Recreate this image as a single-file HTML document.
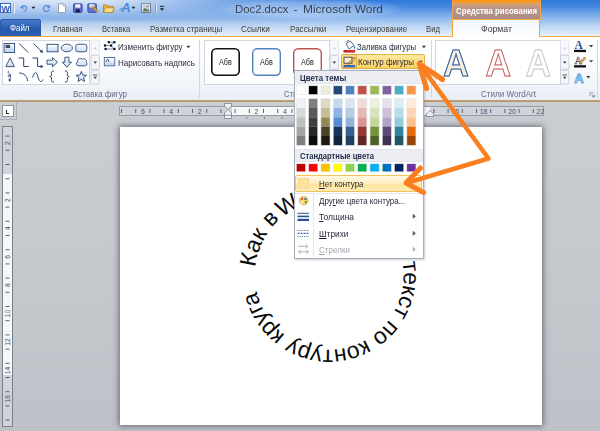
<!DOCTYPE html>
<html lang="ru">
<head>
<meta charset="utf-8">
<title>Doc2.docx - Microsoft Word</title>
<style>
html,body{margin:0;padding:0;}
body{width:600px;height:431px;overflow:hidden;position:relative;background:linear-gradient(to bottom,#cacdd2 100px,#c6c9ce 250px,#bec1c7 431px);font-family:"Liberation Sans","DejaVu Sans",sans-serif;font-size:11px;color:#333;}
.a{position:absolute;}
.t{position:absolute;white-space:nowrap;line-height:1;}
svg{position:absolute;overflow:visible;}
.gal{position:absolute;background:#fff;border:1px solid #d0d6e1;box-sizing:border-box;}
.sep{position:absolute;top:40px;width:1px;height:58px;background:#d5dbe6;}
</style>
</head>
<body>

<div class="a" style="left:0;top:0;width:600px;height:37px;background:linear-gradient(to bottom,#d9e6f6 0,#b9d1f0 8px,#8fb6e9 16px,#8ab3e8 19px,#b9d0ee 24px,#dde8f5 33px,#e6eef8 37px);"></div>
<div class="a" style="left:0;top:0;width:600px;height:37px;background:linear-gradient(to bottom,#3079dc 0,#4789e1 7px,#6ea4e8 13px,#93bcee 19px,#c1d8f4 27px,#e7effa 36px,#e9f0f9 37px);-webkit-mask-image:linear-gradient(to right,transparent 110px,#000 320px);mask-image:linear-gradient(to right,transparent 110px,#000 320px);"></div>
<div class="a" style="left:215px;top:-2px;width:190px;height:22px;border-radius:11px;background:radial-gradient(ellipse at center,rgba(255,255,255,.42) 0,rgba(255,255,255,.28) 45%,rgba(255,255,255,0) 72%);"></div>
<div class="t" style="left:235px;top:3.5px;font-size:11.8px;color:#3a4250;transform:scaleX(0.9596);transform-origin:0 50%;">Doc2.docx</div>
<div class="t" style="left:293.6px;top:3.5px;font-size:11.8px;color:#3a4250;">-</div>
<div class="t" style="left:302.7px;top:3.5px;font-size:11.8px;color:#3a4250;transform:scaleX(1.0113);transform-origin:0 50%;">Microsoft Word</div>
<svg style="left:0;top:0;" width="600" height="431" font-family="Liberation Sans, sans-serif"><rect x="0.5" y="3.5" width="10" height="9" fill="#fff" stroke="#2a5db0" stroke-width=".9"/><text x="1.3" y="11.6" font-size="9.5" font-weight="bold" fill="#2a5db0" textLength="8.6" lengthAdjust="spacingAndGlyphs">W</text><path d="M13.5 3v10.500" stroke="#9fb6d6" stroke-width="1"/><path d="M14.500 3v10.500" stroke="#eef4fb" stroke-width="1"/><path d="M21.500 6.800c3.500 -2.200 6 .3 5 2.500c-.6 1.300 -1.800 1.900 -3 2" stroke="#5c8edb" stroke-width="1.3" fill="none"/><path d="M19.800 7.600l3.600 -2.800v4.400z" fill="#5c8edb"/><path d="M31.400 6.800h4l-2 2.300z" fill="#1c2330"/><path d="M48.600 6.500a3 3 0 1 0 .6 3" stroke="#5c8edb" stroke-width="1.4" fill="none"/><path d="M50.200 4.400v3.800h-3.800z" fill="#5c8edb"/><path d="M58.500 3.800h4.800l2.200 2.200v6.600h-7z" fill="#fff" stroke="#8a93a3" stroke-width=".8"/><path d="M63.300 3.800v2.200h2.200" fill="#dfe4ec" stroke="#8a93a3" stroke-width=".6"/><rect x="73.500" y="3.800" width="8.600" height="8.600" rx=".8" fill="#5a6ccc" stroke="#34409a" stroke-width=".8"/><rect x="75.300" y="4.300" width="5" height="3.400" fill="#eef1fa"/><rect x="75.800" y="9.300" width="4" height="3" fill="#1d1b4a"/><rect x="87.800" y="3.800" width="8.600" height="8.600" rx=".8" fill="#6272ce" stroke="#34409a" stroke-width=".8"/><rect x="89.500" y="4.300" width="5" height="3.200" fill="#eef1fa"/><path d="M91.500 7l5.500 5.300l1.300 -1.300l-5.500 -5.300z" fill="#f0b23c" stroke="#7a5a22" stroke-width=".5"/><path d="M103.500 5h3.500l1 1.200h5v6.200h-9.500z" fill="#e9b83e" stroke="#a8781c" stroke-width=".7"/><path d="M103.500 12.400l2 -4.600h8.800l-2 4.600z" fill="#fbe28f" stroke="#a8781c" stroke-width=".7"/><text x="121.500" y="12.300" font-size="12.500" font-style="italic" font-weight="bold" fill="#4f86d8">A</text><path d="M119.500 9.700l5 -2" stroke="#4f86d8" stroke-width="1.200"/><path d="M131.400 6.800h4l-2 2.300z" fill="#1c2330"/><rect x="141.300" y="3.800" width="9.300" height="8.600" fill="#fff" stroke="#5a6678" stroke-width=".8"/><rect x="142.300" y="4.800" width="7.300" height="6.600" fill="#bcd2ee"/><path d="M142.300 11.400l2.600 -3.600l2 2l1.200 -1l1.500 2.600z" fill="#5d7a52"/><circle cx="147.800" cy="6.300" r="1.100" fill="#f08a24"/><path d="M155.500 3v10.500" stroke="#7f9cc8" stroke-width="1"/><path d="M156.500 3v10.500" stroke="#dce8f6" stroke-width="1"/><path d="M159.800 6.300h4.400" stroke="#1c2330" stroke-width="1"/><path d="M159.800 8.200h4.400l-2.200 2.500z" fill="#1c2330"/></svg>
<div class="a" style="left:452px;top:0;width:88px;height:19px;background:linear-gradient(to bottom,#f7981d 0,#f7981d 3px,#d9a273 3.5px,#b9968a 8px,#a88c86 19px);"></div>
<div class="t" style="left:455.5px;top:6px;font-size:9.6px;color:#fff;font-weight:bold;transform:scaleX(0.8161);transform-origin:0 50%;">Средства рисования</div>
<div class="a" style="left:539.5px;top:0;width:1px;height:20px;background:#f2a63c;"></div>
<div class="a" style="left:451.5px;top:0;width:1px;height:20px;background:#e9a24a;"></div>
<div class="a" style="left:0;top:19px;width:41px;height:17px;border-radius:3px 3px 0 0;background:linear-gradient(to bottom,#4a7fcc 0,#2f64b6 45%,#2358ab 55%,#2c62b6 100%);box-shadow:inset 0 0 0 1px #2a5aa6;"></div>
<div class="t" style="left:9.7px;top:23.3px;font-size:9.8px;color:#fff;transform:scaleX(0.8093);transform-origin:0 50%;">Файл</div>
<div class="t" style="left:52.5px;top:23.5px;font-size:9.4px;color:#3d3d3d;transform:scaleX(0.8266);transform-origin:0 50%;">Главная</div>
<div class="t" style="left:101.7px;top:23.5px;font-size:9.4px;color:#3d3d3d;transform:scaleX(0.8118);transform-origin:0 50%;">Вставка</div>
<div class="t" style="left:149.7px;top:23.5px;font-size:9.4px;color:#3d3d3d;transform:scaleX(0.8500);transform-origin:0 50%;">Разметка страницы</div>
<div class="t" style="left:241.3px;top:23.5px;font-size:9.4px;color:#3d3d3d;transform:scaleX(0.8693);transform-origin:0 50%;">Ссылки</div>
<div class="t" style="left:289.7px;top:23.5px;font-size:9.4px;color:#3d3d3d;transform:scaleX(0.8627);transform-origin:0 50%;">Рассылки</div>
<div class="t" style="left:345.8px;top:23.5px;font-size:9.4px;color:#3d3d3d;transform:scaleX(0.8454);transform-origin:0 50%;">Рецензирование</div>
<div class="t" style="left:426px;top:23.5px;font-size:9.4px;color:#3d3d3d;transform:scaleX(0.8250);transform-origin:0 50%;">Вид</div>
<div class="a" style="left:0;top:36px;width:600px;height:1px;background:#f3a83b;"></div>
<div class="a" style="left:452px;top:19px;width:88px;height:18px;box-sizing:border-box;background:linear-gradient(to bottom,#f1f5fb,#ffffff);border:1px solid #f3a83b;border-bottom:none;border-radius:2px 2px 0 0;"></div>
<div class="t" style="left:481px;top:23.5px;font-size:9.4px;color:#3d3d3d;transform:scaleX(0.9306);transform-origin:0 50%;">Формат</div>
<div class="a" style="left:0;top:37px;width:600px;height:63px;background:linear-gradient(to bottom,#ffffff 0,#fbfcfe 25px,#f1f4f9 48px,#e9edf4 63px);"></div>
<div class="a" style="left:0;top:100px;width:600px;height:2px;background:linear-gradient(#c2a071,#b39773);"></div>
<div class="gal" style="left:2px;top:40px;width:88px;height:45px;"></div>
<div class="t" style="left:118px;top:41.5px;font-size:9.6px;color:#2b2b3b;transform:scaleX(0.8333);transform-origin:0 50%;">Изменить фигуру</div>
<div class="t" style="left:118px;top:58px;font-size:9.6px;color:#2b2b3b;transform:scaleX(0.8374);transform-origin:0 50%;">Нарисовать надпись</div>
<div class="t" style="left:72.5px;top:88.5px;font-size:9.4px;color:#5d6b85;transform:scaleX(0.8487);transform-origin:0 50%;">Вставка фигур</div>
<div class="sep" style="left:199px;background:#f3d4a0;"></div>
<div class="gal" style="left:204px;top:40px;width:126px;height:45px;"></div>
<svg style="left:0;top:0;" width="600" height="431"><rect x="211.8" y="48.8" width="27.4" height="26.4" rx="4.5" fill="#fff" stroke="#111" stroke-width="1.6"/></svg>
<div class="t" style="left:219.2px;top:57.6px;font-size:8.8px;color:#1a1a1a;transform:scaleX(0.8208);transform-origin:0 50%;">Абв</div>
<svg style="left:0;top:0;" width="600" height="431"><rect x="252.7" y="48.7" width="27.6" height="26.6" rx="4.5" fill="#fff" stroke="#4f81bd" stroke-width="1.4"/></svg>
<div class="t" style="left:260.2px;top:57.6px;font-size:8.8px;color:#1a1a1a;transform:scaleX(0.8208);transform-origin:0 50%;">Абв</div>
<svg style="left:0;top:0;" width="600" height="431"><rect x="293.7" y="48.7" width="27.6" height="26.6" rx="4.5" fill="#fff" stroke="#c0504d" stroke-width="1.4"/></svg>
<div class="t" style="left:301.2px;top:57.6px;font-size:8.8px;color:#1a1a1a;transform:scaleX(0.8208);transform-origin:0 50%;">Абв</div>
<div class="t" style="left:357px;top:41.5px;font-size:9.6px;color:#2b2b3b;transform:scaleX(0.8053);transform-origin:0 50%;">Заливка фигуры</div>
<div class="a" style="left:341px;top:54px;width:84px;height:15px;box-sizing:border-box;background:linear-gradient(to bottom,#fde9a4,#fbd25e);border:1px solid #e3b246;border-radius:2px;"></div>
<div class="a" style="left:341px;top:54px;width:16px;height:15px;box-sizing:border-box;border:1px solid #e3a93a;border-radius:2px;background:linear-gradient(to bottom,#fde391,#fbcd55);"></div>
<div class="t" style="left:357.5px;top:57px;font-size:9.6px;color:#2b2b3b;transform:scaleX(0.8347);transform-origin:0 50%;">Контур фигуры</div>
<div class="t" style="left:284px;top:88.5px;font-size:9.4px;color:#5d6b85;transform:scaleX(0.8246);transform-origin:0 50%;">Стили фигур</div>
<div class="sep" style="left:431px;background:#f3d4a0;"></div>
<div class="gal" style="left:435px;top:40px;width:125.5px;height:45px;"></div>
<div class="t" style="left:481px;top:88.5px;font-size:9.4px;color:#5d6b85;transform:scaleX(0.8617);transform-origin:0 50%;">Стили WordArt</div>
<div class="sep" style="left:597px;"></div>
<svg style="left:0;top:0;" width="600" height="431"><defs><linearGradient id="sg" x1="0" y1="0" x2="0" y2="1"><stop offset="0" stop-color="#fbfdff"/><stop offset="1" stop-color="#c9dbf3"/></linearGradient></defs><rect x="4.1" y="43.5" width="10.5" height="9" fill="url(#sg)" stroke="#2a4574" stroke-width=".9"/><rect x="5.6" y="44.8" width="4.5" height="3.2" fill="#3a4a6a"/><rect x="5.1" y="48.7" width="8.5" height="2.8" fill="#c5d6ee"/><path d="M19.2 43.5l9 9" stroke="#2a4574" stroke-width="1" fill="none"/><path d="M33.6 43.5l8.5 8.5" stroke="#2a4574" stroke-width="1" fill="none"/><path d="M43.1 53.0l-3.6 -1l2.6 -2.6z" fill="#2a4574"/><rect x="47.0" y="44.3" width="11" height="7.5" fill="url(#sg)" stroke="#2a4574" stroke-width=".9"/><ellipse cx="66.9" cy="48.0" rx="5.5" ry="3.8" fill="url(#sg)" stroke="#2a4574" stroke-width=".9"/><rect x="75.8" y="44.3" width="11" height="7.5" rx="2" fill="url(#sg)" stroke="#2a4574" stroke-width=".9"/><path d="M10.1 58.0l4.3 8.6h-8.6z" fill="url(#sg)" stroke="#2a4574" stroke-width=".9"/><path d="M18.7 58.0h5v8.5h5" stroke="#2a4574" stroke-width="1" fill="none"/><path d="M32.6 58.0h5v8.5h4" stroke="#2a4574" stroke-width="1" fill="none"/><path d="M43.6 66.5l-3 -1.8v3.6z" fill="#2a4574"/><path d="M47.0 60.2h5.5v-2.6l5 4.6l-5 4.6v-2.6h-5.5z" fill="url(#sg)" stroke="#2a4574" stroke-width=".9"/><path d="M64.9 57.2v5h-2.6l4.6 5l4.6 -5h-2.6v-5z" fill="url(#sg)" stroke="#2a4574" stroke-width=".9"/><path d="M77.8 61.8c-1 -3 3 -4.5 4.5 -2.5c2 -1.5 5 .5 4 3c1.500 1.500 .5 3.500 -1.500 3.500h-6.500c-2.500 0 -2.500 -3.500 -.5 -4z" fill="url(#sg)" stroke="#2a4574" stroke-width=".9"/><path d="M8.8 71.0c-3 2 3 2.500 1 5c-1.500 1.500 -2.500 0 -1 -1c2 -1 2.500 2 .5 4.500" stroke="#2a4574" stroke-width=".9" fill="none"/><path d="M9.6 82.0l1.800 -2.800l-3.200 .4z" fill="#2a4574"/><path d="M19.2 73.0c5 0 8 3.500 8.500 8" stroke="#2a4574" stroke-width="1" fill="none"/><path d="M32.6 77.5c2 -6.500 4 -6.500 5.500 0c1.500 5 3.500 5 5 2" stroke="#2a4574" stroke-width="1" fill="none"/><path d="M54.0 71.0c-2.500 0 -2.500 .5 -2.500 2.500v1.500c0 1 -.5 1.500 -1.800 1.500c1.300 0 1.800 .5 1.800 1.500v1.500c0 2 0 2.500 2.500 2.500" stroke="#2a4574" stroke-width="1" fill="none"/><path d="M64.9 71.0c2.500 0 2.500 .5 2.500 2.500v1.500c0 1 .5 1.500 1.800 1.500c-1.300 0 -1.800 .5 -1.800 1.500v1.500c0 2 0 2.500 -2.500 2.500" stroke="#2a4574" stroke-width="1" fill="none"/><polygon points="81.30,71.40 82.71,75.06 86.63,75.27 83.58,77.74 84.59,81.53 81.30,79.40 78.01,81.53 79.02,77.74 75.97,75.27 79.89,75.06" fill="url(#sg)" stroke="#2a4574" stroke-width=".9"/><rect x="91.0" y="40.0" width="8.4" height="15.0" rx="1" fill="#f7f8fb" stroke="#dde1e9" stroke-width=".8"/><rect x="91.0" y="55.3" width="8.4" height="14.0" rx="1" fill="#f3f5f9" stroke="#c3cad6" stroke-width=".8"/><rect x="91.0" y="70.3" width="8.4" height="13.7" rx="1" fill="#f3f5f9" stroke="#c3cad6" stroke-width=".8"/><path d="M93.4 49.2l1.800 -2.100l1.800 2.100z" fill="#c9cdd4"/><path d="M93.4 61.600h3.600l-1.800 2.200z" fill="#3a4250"/><path d="M93.0 75h4.400" stroke="#3a4250" stroke-width=".9"/><path d="M93.4 76.800h3.600l-1.800 2.200z" fill="#3a4250"/><rect x="330.1" y="40.0" width="8.4" height="15.0" rx="1" fill="#f7f8fb" stroke="#dde1e9" stroke-width=".8"/><rect x="330.1" y="55.3" width="8.4" height="14.0" rx="1" fill="#f3f5f9" stroke="#c3cad6" stroke-width=".8"/><rect x="330.1" y="70.3" width="8.4" height="13.7" rx="1" fill="#f3f5f9" stroke="#c3cad6" stroke-width=".8"/><path d="M332.5 49.2l1.800 -2.100l1.800 2.100z" fill="#c9cdd4"/><path d="M332.5 61.600h3.600l-1.800 2.200z" fill="#3a4250"/><path d="M332.1 75h4.400" stroke="#3a4250" stroke-width=".9"/><path d="M332.5 76.800h3.600l-1.800 2.200z" fill="#3a4250"/><rect x="560.5" y="40.0" width="8.4" height="15.0" rx="1" fill="#f7f8fb" stroke="#dde1e9" stroke-width=".8"/><rect x="560.5" y="55.3" width="8.4" height="14.0" rx="1" fill="#f3f5f9" stroke="#c3cad6" stroke-width=".8"/><rect x="560.5" y="70.3" width="8.4" height="13.7" rx="1" fill="#f3f5f9" stroke="#c3cad6" stroke-width=".8"/><path d="M562.9 49.2l1.800 -2.100l1.800 2.100z" fill="#c9cdd4"/><path d="M562.9 61.600h3.600l-1.800 2.200z" fill="#3a4250"/><path d="M562.5 75h4.400" stroke="#3a4250" stroke-width=".9"/><path d="M562.9 76.800h3.600l-1.800 2.200z" fill="#3a4250"/><path d="M108.8 42.200h5.600l-3.400 3.300l3.400 3.500h-8.800M105 45.500h6" fill="none" stroke="#4a74c0" stroke-width=".8"/><rect x="103.9" y="44.4" width="2.2" height="2.200" fill="#111"/><rect x="107.7" y="41.1" width="2.2" height="2.200" fill="#111"/><rect x="113.3" y="41.1" width="2.2" height="2.200" fill="#111"/><rect x="109.9" y="44.4" width="2.2" height="2.200" fill="#111"/><rect x="104.5" y="47.9" width="2.2" height="2.200" fill="#111"/><rect x="113.3" y="47.9" width="2.2" height="2.200" fill="#111"/><path d="M186.3 45.800h4.200l-2.100 2.400z" fill="#3a4250"/><rect x="104.300" y="57.500" width="10.500" height="8.300" fill="url(#sg)" stroke="#4a6796" stroke-width=".9"/><path d="M106 62l1.600 -3l1.600 3" stroke="#2a3550" stroke-width=".8" fill="none"/><rect x="105.500" y="62.800" width="8" height="2" fill="#c5d6ee"/><path d="M346 43.500l4.500 -2.500l3.500 4.500l-5 3.500z" fill="#f2f5fa" stroke="#3a4a6a" stroke-width=".8"/><path d="M347 42.500c-.5 -2.500 2 -3 2.500 -1" stroke="#3a4a6a" stroke-width=".7" fill="none"/><path d="M354.200 45.500c1 1.500 1.500 2.500 .6 3.200c-.9 .5 -1.500 -.5 -.6 -3.200z" fill="#3f6fc0"/><rect x="343.500" y="50" width="11.500" height="2.600" fill="#cf2a27"/><path d="M421.800 45.800h4.200l-2.100 2.400z" fill="#3a4250"/><rect x="344" y="57.200" width="8" height="6" fill="#fdf3cf" stroke="#3a3f4a" stroke-width=".9"/><path d="M348.500 62.500l5.500 -5.500l1.300 1.300l-5.500 5.500l-1.800 .5z" fill="#e9b36a" stroke="#5a4632" stroke-width=".6"/><rect x="343.500" y="65" width="11.500" height="2.400" fill="#2f62c4"/><path d="M418.300 60.800h4.200l-2.100 2.400z" fill="#3a4250"/><path d="M593.5 92.500h-3.500v3.500" stroke="#8a93a3" stroke-width=".8" fill="none"/><path d="M591.5 94l2.800 2.800m0 -2.200v2.200h-2.200" stroke="#6a7385" stroke-width=".8" fill="none"/></svg>
<svg style="left:0;top:0;" width="600" height="431" font-family="Liberation Sans, sans-serif"><text x="443.3" y="75.8" font-size="36" font-weight="bold" fill="#f4eedd" stroke="#3560a8" stroke-width="1" textLength="25.6" lengthAdjust="spacingAndGlyphs" style="filter:drop-shadow(0.6px 0.8px 0.5px rgba(60,60,60,.45))">A</text><text x="485.4" y="75.800" font-size="36" font-weight="bold" fill="#fffdfd" stroke="#c8605c" stroke-width=".9" textLength="25.6" lengthAdjust="spacingAndGlyphs" style="filter:drop-shadow(0.5px 0.7px 0.5px rgba(120,60,60,.3))">A</text><text x="525.8" y="75.800" font-size="36" font-weight="bold" fill="#ffffff" stroke="#c9ccd2" stroke-width=".9" textLength="25.2" lengthAdjust="spacingAndGlyphs" style="filter:drop-shadow(0.5px 0.7px 0.6px rgba(90,90,90,.3))">A</text><text x="574.500" y="49.300" font-size="11.500" font-family="Liberation Serif, serif" fill="#2b4f91" font-weight="bold">A</text><rect x="574" y="49.800" width="12" height="2.300" fill="#111"/><text x="574.500" y="64" font-size="10.500" font-family="Liberation Serif, serif" fill="#fff" stroke="#555" stroke-width=".5">A</text><path d="M579 63l5.500 -6l1.300 1.300l-5.500 6z" fill="#e4a64a" stroke="#6a4a2a" stroke-width=".5"/><rect x="574" y="65.200" width="12" height="2.300" fill="#111"/><text x="574.300" y="82.500" font-size="13" font-weight="bold" fill="#eaf5fd" stroke="#5aa9e2" stroke-width="1">A</text><path d="M589.0 45.0h4.200l-2.100 2.400z" fill="#3a4250"/><path d="M589.0 60.2h4.200l-2.100 2.400z" fill="#3a4250"/><path d="M586.2 76.0h4.200l-2.100 2.400z" fill="#3a4250"/></svg>
<div class="a" style="left:120px;top:127px;width:422.3px;height:297.8px;background:#fff;box-shadow:0 0 6px 1px rgba(60,66,78,.7);"></div>
<div class="a" style="left:0;top:101px;width:17px;height:19px;border-right:1px solid #aab0ba;border-bottom:1px solid #aab0ba;box-sizing:border-box;"></div>
<div class="a" style="left:2px;top:105px;width:12px;height:12px;background:#fff;border:1px solid #8e959f;box-sizing:border-box;"></div>
<div class="a" style="left:5.9px;top:109.8px;width:1.4px;height:4.1px;background:#222;"></div><div class="a" style="left:5.9px;top:112.6px;width:3px;height:1.3px;background:#222;"></div>
<div class="a" style="left:119px;top:106px;width:425px;height:10px;box-sizing:border-box;background:#d0d3d9;border:1px solid #959ba6;"></div>
<div class="a" style="left:232px;top:107px;width:198px;height:8px;background:#f6f7f9;"></div>
<svg style="left:0;top:0;" width="600" height="431" font-family="Liberation Sans, sans-serif"><rect x="121.0" y="109" width="1" height="4" fill="#5b6370"/><rect x="135.2" y="109" width="1" height="4" fill="#5b6370"/><text x="142.8" y="113.6" font-size="6.8" text-anchor="middle" fill="#4a5260">6</text><rect x="149.4" y="109" width="1" height="4" fill="#5b6370"/><rect x="163.6" y="109" width="1" height="4" fill="#5b6370"/><text x="171.2" y="113.6" font-size="6.8" text-anchor="middle" fill="#4a5260">4</text><rect x="177.8" y="109" width="1" height="4" fill="#5b6370"/><rect x="192.0" y="109" width="1" height="4" fill="#5b6370"/><text x="199.6" y="113.6" font-size="6.8" text-anchor="middle" fill="#4a5260">2</text><rect x="206.2" y="109" width="1" height="4" fill="#5b6370"/><rect x="220.4" y="109" width="1" height="4" fill="#5b6370"/><rect x="234.6" y="109" width="1" height="4" fill="#5b6370"/><rect x="248.8" y="109" width="1" height="4" fill="#5b6370"/><text x="256.4" y="113.6" font-size="6.8" text-anchor="middle" fill="#4a5260">2</text><rect x="263.0" y="109" width="1" height="4" fill="#5b6370"/><rect x="277.2" y="109" width="1" height="4" fill="#5b6370"/><text x="284.8" y="113.6" font-size="6.8" text-anchor="middle" fill="#4a5260">4</text><rect x="291.4" y="109" width="1" height="4" fill="#5b6370"/><rect x="305.6" y="109" width="1" height="4" fill="#5b6370"/><text x="313.2" y="113.6" font-size="6.8" text-anchor="middle" fill="#4a5260">6</text><rect x="319.8" y="109" width="1" height="4" fill="#5b6370"/><rect x="334.0" y="109" width="1" height="4" fill="#5b6370"/><text x="341.6" y="113.6" font-size="6.8" text-anchor="middle" fill="#4a5260">8</text><rect x="348.2" y="109" width="1" height="4" fill="#5b6370"/><rect x="362.4" y="109" width="1" height="4" fill="#5b6370"/><text x="370.0" y="113.6" font-size="6.8" text-anchor="middle" fill="#4a5260">10</text><rect x="376.6" y="109" width="1" height="4" fill="#5b6370"/><rect x="390.8" y="109" width="1" height="4" fill="#5b6370"/><text x="398.4" y="113.6" font-size="6.8" text-anchor="middle" fill="#4a5260">12</text><rect x="405.0" y="109" width="1" height="4" fill="#5b6370"/><rect x="419.2" y="109" width="1" height="4" fill="#5b6370"/><rect x="433.4" y="109" width="1" height="4" fill="#5b6370"/><rect x="447.6" y="109" width="1" height="4" fill="#5b6370"/><text x="455.2" y="113.6" font-size="6.8" text-anchor="middle" fill="#4a5260">16</text><rect x="461.8" y="109" width="1" height="4" fill="#5b6370"/><rect x="476.0" y="109" width="1" height="4" fill="#5b6370"/><text x="483.6" y="113.6" font-size="6.8" text-anchor="middle" fill="#4a5260">18</text><rect x="490.2" y="109" width="1" height="4" fill="#5b6370"/><rect x="504.4" y="109" width="1" height="4" fill="#5b6370"/><text x="512.0" y="113.6" font-size="6.8" text-anchor="middle" fill="#4a5260">20</text><rect x="518.6" y="109" width="1" height="4" fill="#5b6370"/><rect x="532.8" y="109" width="1" height="4" fill="#5b6370"/><text x="540.4" y="113.6" font-size="6.8" text-anchor="middle" fill="#4a5260">22</text><rect x="246.3" y="117" width="0.9" height="1.6" fill="#4a4f58"/><rect x="263.9" y="117" width="0.9" height="1.6" fill="#4a4f58"/><rect x="281.5" y="117" width="0.9" height="1.6" fill="#4a4f58"/><path d="M224.5 103.5h7v2.5l-3.5 3.5l-3.5-3.5z" fill="#eef1f5" stroke="#6d7582" stroke-width=".7"/><path d="M224.5 118.5h7v-5.5l-3.5-3.5l-3.5 3.5z" fill="#eef1f5" stroke="#6d7582" stroke-width=".7"/><path d="M224.5 115.3h7" stroke="#6d7582" stroke-width=".7"/><path d="M426.5 116.5h7v-2.5l-3.5-3.5l-3.5 3.5z" fill="#eef1f5" stroke="#6d7582" stroke-width=".7"/></svg>
<div class="a" style="left:2px;top:126px;width:11px;height:301px;box-sizing:border-box;background:#d0d3d9;border:1px solid #7b818b;"></div>
<div class="a" style="left:3px;top:173.7px;width:9px;height:201.8px;background:#f6f7f9;"></div>
<svg style="left:0;top:0;" width="600" height="431" font-family="Liberation Sans, sans-serif"><rect x="5.5" y="135.6" width="4" height="1" fill="#5b6370"/><text transform="translate(10.2 143.2) rotate(-90)" font-size="6.8" text-anchor="middle" fill="#4a5260">2</text><rect x="5.5" y="149.8" width="4" height="1" fill="#5b6370"/><rect x="5.5" y="164.0" width="4" height="1" fill="#5b6370"/><rect x="5.5" y="178.2" width="4" height="1" fill="#5b6370"/><rect x="5.5" y="192.4" width="4" height="1" fill="#5b6370"/><text transform="translate(10.2 200.0) rotate(-90)" font-size="6.8" text-anchor="middle" fill="#4a5260">2</text><rect x="5.5" y="206.6" width="4" height="1" fill="#5b6370"/><rect x="5.5" y="220.8" width="4" height="1" fill="#5b6370"/><text transform="translate(10.2 228.4) rotate(-90)" font-size="6.8" text-anchor="middle" fill="#4a5260">4</text><rect x="5.5" y="235.0" width="4" height="1" fill="#5b6370"/><rect x="5.5" y="249.2" width="4" height="1" fill="#5b6370"/><text transform="translate(10.2 256.8) rotate(-90)" font-size="6.8" text-anchor="middle" fill="#4a5260">6</text><rect x="5.5" y="263.4" width="4" height="1" fill="#5b6370"/><rect x="5.5" y="277.6" width="4" height="1" fill="#5b6370"/><text transform="translate(10.2 285.2) rotate(-90)" font-size="6.8" text-anchor="middle" fill="#4a5260">8</text><rect x="5.5" y="291.8" width="4" height="1" fill="#5b6370"/><rect x="5.5" y="306.0" width="4" height="1" fill="#5b6370"/><text transform="translate(10.2 313.6) rotate(-90)" font-size="6.8" text-anchor="middle" fill="#4a5260">10</text><rect x="5.5" y="320.2" width="4" height="1" fill="#5b6370"/><rect x="5.5" y="334.4" width="4" height="1" fill="#5b6370"/><text transform="translate(10.2 342.0) rotate(-90)" font-size="6.8" text-anchor="middle" fill="#4a5260">12</text><rect x="5.5" y="348.6" width="4" height="1" fill="#5b6370"/><rect x="5.5" y="362.8" width="4" height="1" fill="#5b6370"/><text transform="translate(10.2 370.4) rotate(-90)" font-size="6.8" text-anchor="middle" fill="#4a5260">14</text><rect x="5.5" y="377.0" width="4" height="1" fill="#5b6370"/><rect x="5.5" y="391.2" width="4" height="1" fill="#5b6370"/><text transform="translate(10.2 398.8) rotate(-90)" font-size="6.8" text-anchor="middle" fill="#4a5260">16</text><rect x="5.5" y="405.4" width="4" height="1" fill="#5b6370"/><rect x="5.5" y="419.6" width="4" height="1" fill="#5b6370"/></svg>
<svg style="left:0;top:0;" width="600" height="431" font-family="Liberation Sans, sans-serif" font-size="23" fill="#0a0a0a"><defs><path id="c1" d="M255.41 267.26 A74.2 74 0 1 1 402.99 282.74 A74.2 74 0 1 1 255.41 267.26"/><path id="c0" d="M282.20 217.74 A74.2 74 0 1 1 376.20 332.26 A74.2 74 0 1 1 282.20 217.74"/><path id="c2" d="M321.44 201.41 A74.2 74 0 1 1 336.96 348.59 A74.2 74 0 1 1 321.44 201.41"/><path id="c3" d="M402.27 262.15 A74.2 74 0 1 1 256.13 287.85 A74.2 74 0 1 1 402.27 262.15"/></defs><text letter-spacing="0.1"><textPath href="#c1">Как в</textPath></text><text letter-spacing="-1.2"><textPath href="#c0">Word</textPath></text><text letter-spacing="-1.2"><textPath href="#c2">написать</textPath></text><text letter-spacing="-0.3"><textPath href="#c3">текст по контуру круга</textPath></text></svg>
<div class="a" style="left:293.5px;top:69.5px;width:130.5px;height:189.0px;box-sizing:border-box;background:#fff;border:1px solid #a9adb8;box-shadow:1px 1px 2px rgba(60,70,100,.28);"></div>
<div class="a" style="left:294.5px;top:70.5px;width:128.5px;height:13px;background:#eceef4;border-bottom:1px solid #e1e4ec;box-sizing:border-box;"></div>
<div class="t" style="left:300px;top:74.3px;font-size:9px;color:#1e2a47;font-weight:bold;transform:scaleX(0.8810);transform-origin:0 50%;">Цвета темы</div>
<svg style="left:0;top:0;" width="600" height="431"><rect x="296.40" y="85.8" width="9.1" height="8.8" fill="#FFFFFF" stroke="#e2e4e7" stroke-width=".6"/><rect x="296.40" y="98.70" width="9.1" height="9.40" fill="#F2F2F2"/><rect x="296.40" y="108.02" width="9.1" height="9.40" fill="#D8D8D8"/><rect x="296.40" y="117.34" width="9.1" height="9.40" fill="#BFBFBF"/><rect x="296.40" y="126.66" width="9.1" height="9.40" fill="#A5A5A5"/><rect x="296.40" y="135.98" width="9.1" height="9.40" fill="#7F7F7F"/><rect x="296.40" y="98.7" width="9.1" height="46.6" fill="none" stroke="#e2e4e7" stroke-width=".6"/><rect x="296.40" y="163.8" width="9.1" height="8" fill="#C00000" stroke="#e2e4e7" stroke-width=".5"/><rect x="308.67" y="85.8" width="9.1" height="8.8" fill="#000000" stroke="#e2e4e7" stroke-width=".6"/><rect x="308.67" y="98.70" width="9.1" height="9.40" fill="#7F7F7F"/><rect x="308.67" y="108.02" width="9.1" height="9.40" fill="#595959"/><rect x="308.67" y="117.34" width="9.1" height="9.40" fill="#3F3F3F"/><rect x="308.67" y="126.66" width="9.1" height="9.40" fill="#262626"/><rect x="308.67" y="135.98" width="9.1" height="9.40" fill="#0C0C0C"/><rect x="308.67" y="98.7" width="9.1" height="46.6" fill="none" stroke="#e2e4e7" stroke-width=".6"/><rect x="308.67" y="163.8" width="9.1" height="8" fill="#FF0000" stroke="#e2e4e7" stroke-width=".5"/><rect x="320.94" y="85.8" width="9.1" height="8.8" fill="#EEECE1" stroke="#e2e4e7" stroke-width=".6"/><rect x="320.94" y="98.70" width="9.1" height="9.40" fill="#DDD9C3"/><rect x="320.94" y="108.02" width="9.1" height="9.40" fill="#C4BD97"/><rect x="320.94" y="117.34" width="9.1" height="9.40" fill="#938953"/><rect x="320.94" y="126.66" width="9.1" height="9.40" fill="#494429"/><rect x="320.94" y="135.98" width="9.1" height="9.40" fill="#1D1B10"/><rect x="320.94" y="98.7" width="9.1" height="46.6" fill="none" stroke="#e2e4e7" stroke-width=".6"/><rect x="320.94" y="163.8" width="9.1" height="8" fill="#FFC000" stroke="#e2e4e7" stroke-width=".5"/><rect x="333.21" y="85.8" width="9.1" height="8.8" fill="#1F497D" stroke="#e2e4e7" stroke-width=".6"/><rect x="333.21" y="98.70" width="9.1" height="9.40" fill="#C6D9F0"/><rect x="333.21" y="108.02" width="9.1" height="9.40" fill="#8DB3E2"/><rect x="333.21" y="117.34" width="9.1" height="9.40" fill="#548DD4"/><rect x="333.21" y="126.66" width="9.1" height="9.40" fill="#17365D"/><rect x="333.21" y="135.98" width="9.1" height="9.40" fill="#0F243E"/><rect x="333.21" y="98.7" width="9.1" height="46.6" fill="none" stroke="#e2e4e7" stroke-width=".6"/><rect x="333.21" y="163.8" width="9.1" height="8" fill="#FFFF00" stroke="#e2e4e7" stroke-width=".5"/><rect x="345.48" y="85.8" width="9.1" height="8.8" fill="#4F81BD" stroke="#e2e4e7" stroke-width=".6"/><rect x="345.48" y="98.70" width="9.1" height="9.40" fill="#DBE5F1"/><rect x="345.48" y="108.02" width="9.1" height="9.40" fill="#B8CCE4"/><rect x="345.48" y="117.34" width="9.1" height="9.40" fill="#95B3D7"/><rect x="345.48" y="126.66" width="9.1" height="9.40" fill="#366092"/><rect x="345.48" y="135.98" width="9.1" height="9.40" fill="#244061"/><rect x="345.48" y="98.7" width="9.1" height="46.6" fill="none" stroke="#e2e4e7" stroke-width=".6"/><rect x="345.48" y="163.8" width="9.1" height="8" fill="#92D050" stroke="#e2e4e7" stroke-width=".5"/><rect x="357.75" y="85.8" width="9.1" height="8.8" fill="#C0504D" stroke="#e2e4e7" stroke-width=".6"/><rect x="357.75" y="98.70" width="9.1" height="9.40" fill="#F2DCDB"/><rect x="357.75" y="108.02" width="9.1" height="9.40" fill="#E5B9B7"/><rect x="357.75" y="117.34" width="9.1" height="9.40" fill="#D99694"/><rect x="357.75" y="126.66" width="9.1" height="9.40" fill="#953734"/><rect x="357.75" y="135.98" width="9.1" height="9.40" fill="#632423"/><rect x="357.75" y="98.7" width="9.1" height="46.6" fill="none" stroke="#e2e4e7" stroke-width=".6"/><rect x="357.75" y="163.8" width="9.1" height="8" fill="#00B050" stroke="#e2e4e7" stroke-width=".5"/><rect x="370.02" y="85.8" width="9.1" height="8.8" fill="#9BBB59" stroke="#e2e4e7" stroke-width=".6"/><rect x="370.02" y="98.70" width="9.1" height="9.40" fill="#EBF1DD"/><rect x="370.02" y="108.02" width="9.1" height="9.40" fill="#D7E3BC"/><rect x="370.02" y="117.34" width="9.1" height="9.40" fill="#C3D69B"/><rect x="370.02" y="126.66" width="9.1" height="9.40" fill="#76923C"/><rect x="370.02" y="135.98" width="9.1" height="9.40" fill="#4F6128"/><rect x="370.02" y="98.7" width="9.1" height="46.6" fill="none" stroke="#e2e4e7" stroke-width=".6"/><rect x="370.02" y="163.8" width="9.1" height="8" fill="#00B0F0" stroke="#e2e4e7" stroke-width=".5"/><rect x="382.29" y="85.8" width="9.1" height="8.8" fill="#8064A2" stroke="#e2e4e7" stroke-width=".6"/><rect x="382.29" y="98.70" width="9.1" height="9.40" fill="#E5E0EC"/><rect x="382.29" y="108.02" width="9.1" height="9.40" fill="#CCC1D9"/><rect x="382.29" y="117.34" width="9.1" height="9.40" fill="#B2A2C7"/><rect x="382.29" y="126.66" width="9.1" height="9.40" fill="#5F497A"/><rect x="382.29" y="135.98" width="9.1" height="9.40" fill="#3F3151"/><rect x="382.29" y="98.7" width="9.1" height="46.6" fill="none" stroke="#e2e4e7" stroke-width=".6"/><rect x="382.29" y="163.8" width="9.1" height="8" fill="#0070C0" stroke="#e2e4e7" stroke-width=".5"/><rect x="394.56" y="85.8" width="9.1" height="8.8" fill="#4BACC6" stroke="#e2e4e7" stroke-width=".6"/><rect x="394.56" y="98.70" width="9.1" height="9.40" fill="#DBEEF3"/><rect x="394.56" y="108.02" width="9.1" height="9.40" fill="#B7DDE8"/><rect x="394.56" y="117.34" width="9.1" height="9.40" fill="#92CDDC"/><rect x="394.56" y="126.66" width="9.1" height="9.40" fill="#31859B"/><rect x="394.56" y="135.98" width="9.1" height="9.40" fill="#205867"/><rect x="394.56" y="98.7" width="9.1" height="46.6" fill="none" stroke="#e2e4e7" stroke-width=".6"/><rect x="394.56" y="163.8" width="9.1" height="8" fill="#002060" stroke="#e2e4e7" stroke-width=".5"/><rect x="406.83" y="85.8" width="9.1" height="8.8" fill="#F79646" stroke="#e2e4e7" stroke-width=".6"/><rect x="406.83" y="98.70" width="9.1" height="9.40" fill="#FDEADA"/><rect x="406.83" y="108.02" width="9.1" height="9.40" fill="#FBD5B5"/><rect x="406.83" y="117.34" width="9.1" height="9.40" fill="#FAC08F"/><rect x="406.83" y="126.66" width="9.1" height="9.40" fill="#E36C09"/><rect x="406.83" y="135.98" width="9.1" height="9.40" fill="#974806"/><rect x="406.83" y="98.7" width="9.1" height="46.6" fill="none" stroke="#e2e4e7" stroke-width=".6"/><rect x="406.83" y="163.8" width="9.1" height="8" fill="#7030A0" stroke="#e2e4e7" stroke-width=".5"/></svg>
<div class="a" style="left:294.5px;top:148.5px;width:128.5px;height:13px;background:#eceef4;border-top:1px solid #e1e4ec;border-bottom:1px solid #e1e4ec;box-sizing:border-box;"></div>
<div class="t" style="left:300px;top:152.1px;font-size:9px;color:#1e2a47;font-weight:bold;transform:scaleX(0.8435);transform-origin:0 50%;">Стандартные цвета</div>
<div class="a" style="left:295px;top:174.5px;width:127px;height:17px;box-sizing:border-box;border:1px solid #f0c55e;border-radius:2px;background:linear-gradient(to bottom,#fff9e4 0,#fff0c4 45%,#fee59c 55%,#feecb4 100%);"></div>
<div class="a" style="left:297.5px;top:177.5px;width:11px;height:10.5px;box-sizing:border-box;border:1px dotted #e8cf95;background:#fde29a;"></div>
<div class="t" style="left:319.2px;top:178.8px;font-size:9.6px;color:#1f2433;transform:scaleX(0.8267);transform-origin:0 50%;"><u>Н</u>ет контура</div>
<div class="a" style="left:313px;top:193px;width:1px;height:64px;background:#e3e6ea;"></div>
<div class="a" style="left:295px;top:192.5px;width:128px;height:1px;background:#e6e9ee;"></div>
<div class="t" style="left:319.2px;top:196px;font-size:9.6px;color:#1f2433;transform:scaleX(0.8299);transform-origin:0 50%;">Дру<u>г</u>ие цвета контура...</div>
<div class="t" style="left:319.2px;top:212px;font-size:9.6px;color:#1f2433;transform:scaleX(0.8808);transform-origin:0 50%;"><u>Т</u>олщина</div>
<div class="t" style="left:319.2px;top:229px;font-size:9.6px;color:#1f2433;transform:scaleX(0.8665);transform-origin:0 50%;"><u>Ш</u>трихи</div>
<div class="t" style="left:319.2px;top:245px;font-size:9.6px;color:#a3a7ae;transform:scaleX(0.8414);transform-origin:0 50%;"><u>С</u>трелки</div>
<svg style="left:0;top:0;" width="600" height="431"><ellipse cx="303.8" cy="200.6" rx="4.4" ry="4.2" fill="#f7d774" stroke="#c79a2b" stroke-width=".7"/><circle cx="302" cy="198.8" r="1.1" fill="#d8322a"/><circle cx="305.4" cy="199.2" r="1.1" fill="#2e62c9"/><circle cx="305.8" cy="202.2" r="1.1" fill="#3ea13e"/><circle cx="302.3" cy="202.6" r=".9" fill="#fff"/><rect x="297.5" y="212.8" width="11.5" height="1" fill="#2b4f91"/><rect x="297.5" y="215.6" width="11.5" height="1.6" fill="#2b4f91"/><rect x="297.5" y="218.8" width="11.5" height="2.2" fill="#2b4f91"/><path d="M297.5 230.5h11.5" stroke="#4469a8" stroke-width="1" stroke-dasharray=".8 .8"/><path d="M297.5 233.4h11.5" stroke="#4469a8" stroke-width="1.1" stroke-dasharray="2 1"/><path d="M297.5 236.5h11.5" stroke="#4469a8" stroke-width="1.1" stroke-dasharray="1 1.2"/><path d="M298 246.3h10M305.5 244.3l2.5 2l-2.5 2" stroke="#a9aeb6" stroke-width=".9" fill="none"/><path d="M298.5 251.8h10M301 249.8l-2.5 2l2.5 2M306 249.8l2.5 2l-2.5 2" stroke="#a9aeb6" stroke-width=".9" fill="none"/><path d="M412.8 213.7l3 2.6l-3 2.6z" fill="#4d5563"/><path d="M412.8 230.7l3 2.6l-3 2.6z" fill="#4d5563"/><path d="M412.8 246.7l3 2.6l-3 2.6z" fill="#a9aeb6"/></svg>
<svg style="left:0;top:0;" width="600" height="431"><g fill="none" stroke="#f97f20" stroke-width="4.6" stroke-linecap="round" stroke-linejoin="round"><path d="M419.5 64 L488.5 158.5 L406.5 183"/><path d="M426.5 88.5 L419.3 63.8 L442.5 79.5" stroke-width="5.2"/><path d="M420.5 168 L406 183 L423.5 192.5" stroke-width="5"/></g></svg>

</body>
</html>
